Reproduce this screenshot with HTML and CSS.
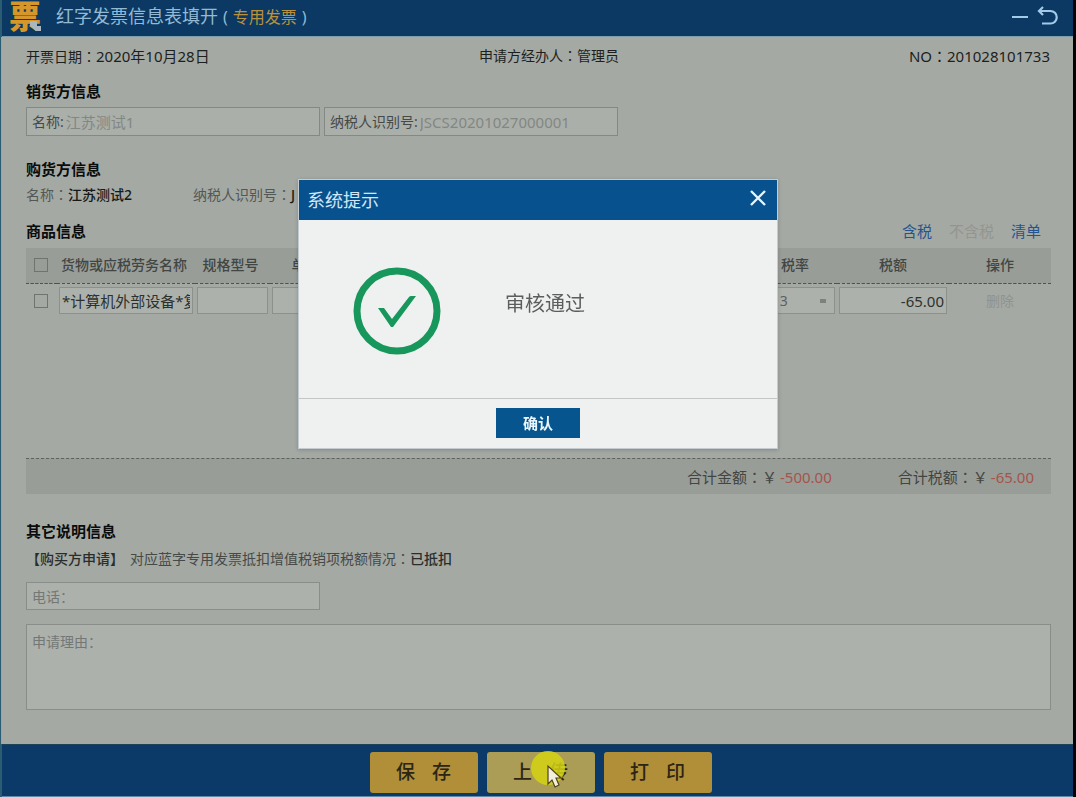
FILE: index.html
```html
<!DOCTYPE html>
<html lang="zh-CN">
<head>
    <meta charset="UTF-8" />
    <meta name="viewport" content="width=device-width, initial-scale=1.0" />
    <title>红字发票信息表填开</title>
    <link rel="stylesheet" href="styles.css">
</head>
<body>
    <div class="window">
        <header class="titlebar">
            <span class="logo">票
                <svg class="logo-mark" width="14" height="12" viewBox="0 0 14 12" aria-hidden="true">
                    <path d="M1 1h7v5h4v5H7L1 6z" fill="#a9b8c0" />
                </svg>
            </span>
            <h1>红字发票信息表填开<span class="paren">(</span><em>专用发票</em><span class="paren">)</span></h1>
            <div class="window-buttons">
                <button type="button" aria-label="最小化">
                    <svg width="18" height="22" viewBox="0 0 18 22">
                        <path d="M1 12h16" stroke="#a3cbe8" stroke-width="2" />
                    </svg>
                </button>
                <button type="button" aria-label="返回">
                    <svg width="22" height="22" viewBox="0 0 22 22" fill="none" stroke="#a3cbe8" stroke-width="2.200">
                        <path d="M3 6h10.500a5.800 5.800 0 0 1 0 12.500H5" />
                        <path d="M6 2L2 6l4 4" />
                    </svg>
                </button>
            </div>
        </header>

        <main>
            <div class="meta">
                <span>开票日期<i>：</i><time>2020年10月28日</time></span>
                <span class="operator">申请方经办人<i>：</i>管理员</span>
                <span class="number">NO<i>：</i>201028101733</span>
            </div>

            <h2>销货方信息</h2>
            <div class="fields">
                <label class="field">名称:<input type="text" value="江苏测试1" /></label>
                <label class="field">纳税人识别号:<input type="text" value="JSCS20201027000001" /></label>
            </div>

            <h2 class="buyer-title">购货方信息</h2>
            <div class="buyer">
                <span class="buyer-name">名称<i>：</i><b>江苏测试2</b></span>
                <span>纳税人识别号<i>：</i><b>J</b></span>
            </div>

            <div class="goods-title">
                <h2>商品信息</h2>
                <nav>
                    <a href="#">含税</a>
                    <a href="#" class="off">不含税</a>
                    <a href="#">清单</a>
                </nav>
            </div>
            <div class="goods">
                <table>
                    <colgroup>
                        <col class="col-check" />
                        <col class="col-name" />
                        <col class="col-small" />
                        <col class="col-small" />
                        <col />
                        <col />
                        <col />
                        <col class="col-rate" />
                        <col class="col-tax" />
                        <col class="col-action" />
                    </colgroup>
                    <thead>
                        <tr>
                            <th><input type="checkbox" aria-label="全选" /></th>
                            <th>货物或应税劳务名称</th>
                            <th>规格型号</th>
                            <th>单位</th>
                            <th>数量</th>
                            <th>单价</th>
                            <th>金额</th>
                            <th>税率</th>
                            <th>税额</th>
                            <th>操作</th>
                        </tr>
                    </thead>
                    <tbody>
                        <tr>
                            <td><input type="checkbox" aria-label="选择" /></td>
                            <td><input type="text" aria-label="货物名称" value="*计算机外部设备*复印机" class="goods-name" /></td>
                            <td><input type="text" aria-label="规格型号" /></td>
                            <td><input type="text" aria-label="单位" /></td>
                            <td><input type="text" aria-label="数量" /></td>
                            <td><input type="text" aria-label="单价" /></td>
                            <td><input type="text" aria-label="金额" value="-500.00" class="money" /></td>
                            <td>
                                <select aria-label="税率">
                                    <option>0.13</option>
                                </select>
                            </td>
                            <td><input type="text" aria-label="税额" value="-65.00" class="money" /></td>
                            <td><button type="button" class="remove">删除</button></td>
                        </tr>
                    </tbody>
                </table>
            </div>
            <div class="totals">
                <span>合计金额<i>：</i>￥<b>-500.00</b></span>
                <span>合计税额<i>：</i>￥<b>-65.00</b></span>
            </div>

            <h2>其它说明信息</h2>
            <p class="note"><strong>【购买方申请】</strong>对应蓝字专用发票抵扣增值税销项税额情况<i>：</i><strong>已抵扣</strong></p>
            <input type="text" class="phone" aria-label="电话" placeholder="电话：" />
            <textarea class="reason" aria-label="申请理由" placeholder="申请理由："></textarea>
        </main>

        <footer>
            <button type="button">保存</button>
            <button type="button" class="active">上传
                <svg class="pointer" width="34" height="38" viewBox="0 0 34 38" aria-hidden="true">
                    <circle cx="17" cy="17" r="17" fill="#d3d414" fill-opacity="0.85" />
                    <path d="M17 15v18l4-4 3 7 4-2-3-7h5z" fill="#f4eedc" stroke="#4d431f" stroke-width="1.200" />
                </svg>
            </button>
            <button type="button">打印</button>
        </footer>
    </div>

    <dialog open aria-labelledby="dialogTitle">
        <div class="dialog-head">
            <h3 id="dialogTitle">系统提示</h3>
            <button type="button" aria-label="关闭">
                <svg width="16" height="16" viewBox="0 0 16 16">
                    <path d="M1 1l14 14M15 1L1 15" stroke="#e6f4fc" stroke-width="2.400" />
                </svg>
            </button>
        </div>
        <div class="dialog-body">
            <svg width="88" height="88" viewBox="0 0 88 88" aria-hidden="true">
                <circle cx="44" cy="44" r="40" fill="none" stroke="#17975c" stroke-width="7" />
                <path d="M25 41h6l8 11 17-22q1-1 2-1h5L40 60h-2z" fill="#17975c" />
            </svg>
            <p>审核通过</p>
        </div>
        <div class="dialog-foot">
            <button type="button">确认</button>
        </div>
    </dialog>
</body>
</html>
```

FILE: styles.css
```css
* {
  box-sizing: border-box;
}

body,
h1,
h2,
h3,
p {
  margin: 0;
  padding: 0;
}

body,
input,
select,
textarea,
button {
  font-family: 'Noto Sans', 'Noto Sans CJK SC', sans-serif;
  font-size: 14px;
}

body {
  color: #1c1f1d;
  background-color: #a5a9a4;
  line-height: 20px;
}

button {
  border: none;
  padding: 0;
  background: none;
  cursor: pointer;
}

/* Dois-pontos centralizado */
i {
  -webkit-locale: 'zh-TW';
  font-family: 'Noto Sans CJK TC', sans-serif;
  font-style: normal;
  line-height: 1;
}

.window {
  display: flex;
  flex-direction: column;
  min-height: 100vh;
  border-left: 2px solid #2b5d72;
  border-right: 3px solid #020305;
}

/* Barra de título */
.titlebar {
  display: flex;
  align-items: center;
  height: 37px;
  padding: 0 14px 4px 7px;
  background-color: #0b3963;
  border-bottom: 1px solid #7e9cab;
}

.logo {
  position: relative;
  width: 36px;
  font-size: 32px;
  font-weight: 900;
  line-height: 36px;
  color: #d5962b;
}

.logo-mark {
  position: absolute;
  right: 2px;
  bottom: 2px;
}

h1 {
  flex: 1;
  padding-left: 11px;
  font-size: 18px;
  font-weight: 400;
  color: #93b9d5;
}

h1 em {
  font-size: 16px;
  font-style: normal;
  color: #b8923f;
}

.paren {
  margin: 0 5px;
  font-size: 16px;
}

.window-buttons {
  display: flex;
  gap: 8px;
}

.window-buttons svg {
  display: block;
}

main {
  flex: 1;
  display: flex;
  flex-direction: column;
  padding: 7px 22px 34px 24px;
  border-left: 1px solid #93a9ae;
  margin-left: -1px;
}

h2 {
  font-size: 15px;
  font-weight: 700;
  line-height: 22px;
  color: #0a0c0b;
}

.meta {
  display: grid;
  grid-template-columns: 1fr auto 1fr;
  align-items: center;
  height: 24px;
  margin-bottom: 12px;
  padding-right: 1px;
}

.meta time,
.number {
  font-size: 15px;
}

.operator {
  padding-left: 22px;
}

.number {
  text-align: right;
}

.fields {
  display: flex;
  gap: 4px;
  margin-top: 5px;
}

.field {
  display: flex;
  align-items: center;
  width: 294px;
  height: 29px;
  padding: 0 5px;
  border: 1px solid #858985;
  background-color: #abafaa;
  color: #454a47;
}

.field input {
  flex: 1;
  min-width: 0;
  padding: 0 2px;
  border: none;
  background: none;
  font-size: 15px;
  color: #828782;
}

.buyer-title {
  margin-top: 22px;
}

.buyer {
  display: flex;
  margin-top: 5px;
  color: #535855;
}

.buyer b {
  font-weight: 500;
  color: #161917;
}

.buyer-name {
  width: 167px;
}

.goods-title {
  display: flex;
  justify-content: space-between;
  margin-top: 15px;
}

.goods-title nav {
  display: flex;
  gap: 17px;
  padding-right: 10px;
  font-size: 15px;
  line-height: 22px;
}

a {
  color: #24548d;
  text-decoration: none;
}

a.off {
  color: #92968f;
}

.goods {
  flex: 1;
  margin-top: 6px;
}

table {
  width: 100%;
  table-layout: fixed;
  border-collapse: collapse;
}

.col-check {
  width: 31px;
}

.col-name {
  width: 138px;
}

.col-small {
  width: 75px;
}

.col-rate {
  width: 80px;
}

.col-tax {
  width: 112px;
}

.col-action {
  width: 102px;
}

th {
  height: 35px;
  padding: 0 4px 0 0;
  background-color: #999d98;
  border-bottom: 1px dashed #4e534f;
  font-weight: 500;
  color: #424643;
  white-space: nowrap;
}

th:nth-last-child(-n + 2) {
  padding-right: 0;
}

td {
  height: 35px;
  padding: 0 2px;
  text-align: center;
}

td input[type='text'],
td select {
  display: block;
  width: 100%;
  height: 27px;
  padding: 0 2px;
  border: 1px solid #8d918c;
  background-color: #adb1ac;
  color: #2d312e;
}

td select {
  appearance: none;
  padding-left: 0;
  color: #5c615d;
  background-image: linear-gradient(#7e827e, #7e827e);
  background-repeat: no-repeat;
  background-position: right 8px center;
  background-size: 6px 4px;
}

td .money,
td .goods-name {
  font-size: 15px;
}

td .money {
  text-align: right;
}

input[type='checkbox'] {
  appearance: none;
  display: block;
  width: 14px;
  height: 14px;
  margin: 0 8px;
  border: 1px solid #6f7470;
}

td input[type='checkbox'] {
  margin: 0 6px;
}

.remove {
  color: #8f938f;
}

.totals {
  display: flex;
  justify-content: flex-end;
  align-items: center;
  gap: 66px;
  height: 36px;
  padding-right: 17px;
  margin-bottom: 26px;
  border-top: 1px dashed #5d625e;
  background-color: #999d98;
  font-size: 15px;
  color: #424643;
}

.totals b {
  margin-left: 3px;
  font-weight: 400;
  color: #a5544c;
}

.note {
  margin: 7px 0 13px;
  color: #454a47;
}

.note strong {
  font-weight: 500;
  color: #2a2e2b;
}

.note strong:first-child {
  margin-right: 6px;
}

.phone,
.reason {
  padding: 0 5px;
  border: 1px solid #8a8e8a;
  background-color: #adb1ac;
}

.phone {
  width: 294px;
  height: 28px;
}

.reason {
  width: 100%;
  height: 86px;
  margin-top: 14px;
  padding-top: 6px;
  resize: none;
}

::placeholder {
  color: #737874;
}

footer {
  display: flex;
  justify-content: center;
  gap: 9px;
  height: 53px;
  padding: 7px 0 4px 6px;
  background-color: #0b3a68;
  border-top: 1px solid #1e4256;
  border-bottom: 1px solid #5f8aa8;
}

footer button {
  position: relative;
  width: 108px;
  height: 41px;
  padding: 0 0 3px 17px;
  border-radius: 3px;
  background-color: #b08f38;
  font-size: 19px;
  font-weight: 500;
  letter-spacing: 17px;
  color: #2c2514;
}

footer .active {
  background-color: #ab9d55;
}

.pointer {
  position: absolute;
  left: 44px;
  top: -1px;
}

dialog {
  position: fixed;
  top: 179px;
  width: 480px;
  padding: 0;
  border: 1px solid #c3cdd1;
  background-color: #eff0f0;
  box-shadow: 0 1px 4px rgba(0, 0, 0, 0.2);
}

.dialog-head {
  display: flex;
  justify-content: space-between;
  align-items: center;
  height: 40px;
  padding: 0 11px 0 8px;
  background-color: #07518f;
}

.dialog-head button {
  padding-bottom: 4px;
}

.dialog-head svg {
  display: block;
}

h3 {
  font-size: 18px;
  font-weight: 400;
  color: #d3e8f6;
}

.dialog-body {
  display: flex;
  align-items: center;
  gap: 64px;
  height: 179px;
  padding: 3px 54px 0;
  border-bottom: 1px solid #c4c6c6;
}

.dialog-body p {
  padding-bottom: 14px;
  font-size: 20px;
  color: #5c5e5e;
}

.dialog-foot {
  display: flex;
  justify-content: center;
  padding: 9px 0 10px;
}

.dialog-foot button {
  width: 84px;
  height: 30px;
  padding-bottom: 2px;
  background-color: #07558f;
  font-size: 15px;
  font-weight: 700;
  color: #e8f5fb;
}
```
